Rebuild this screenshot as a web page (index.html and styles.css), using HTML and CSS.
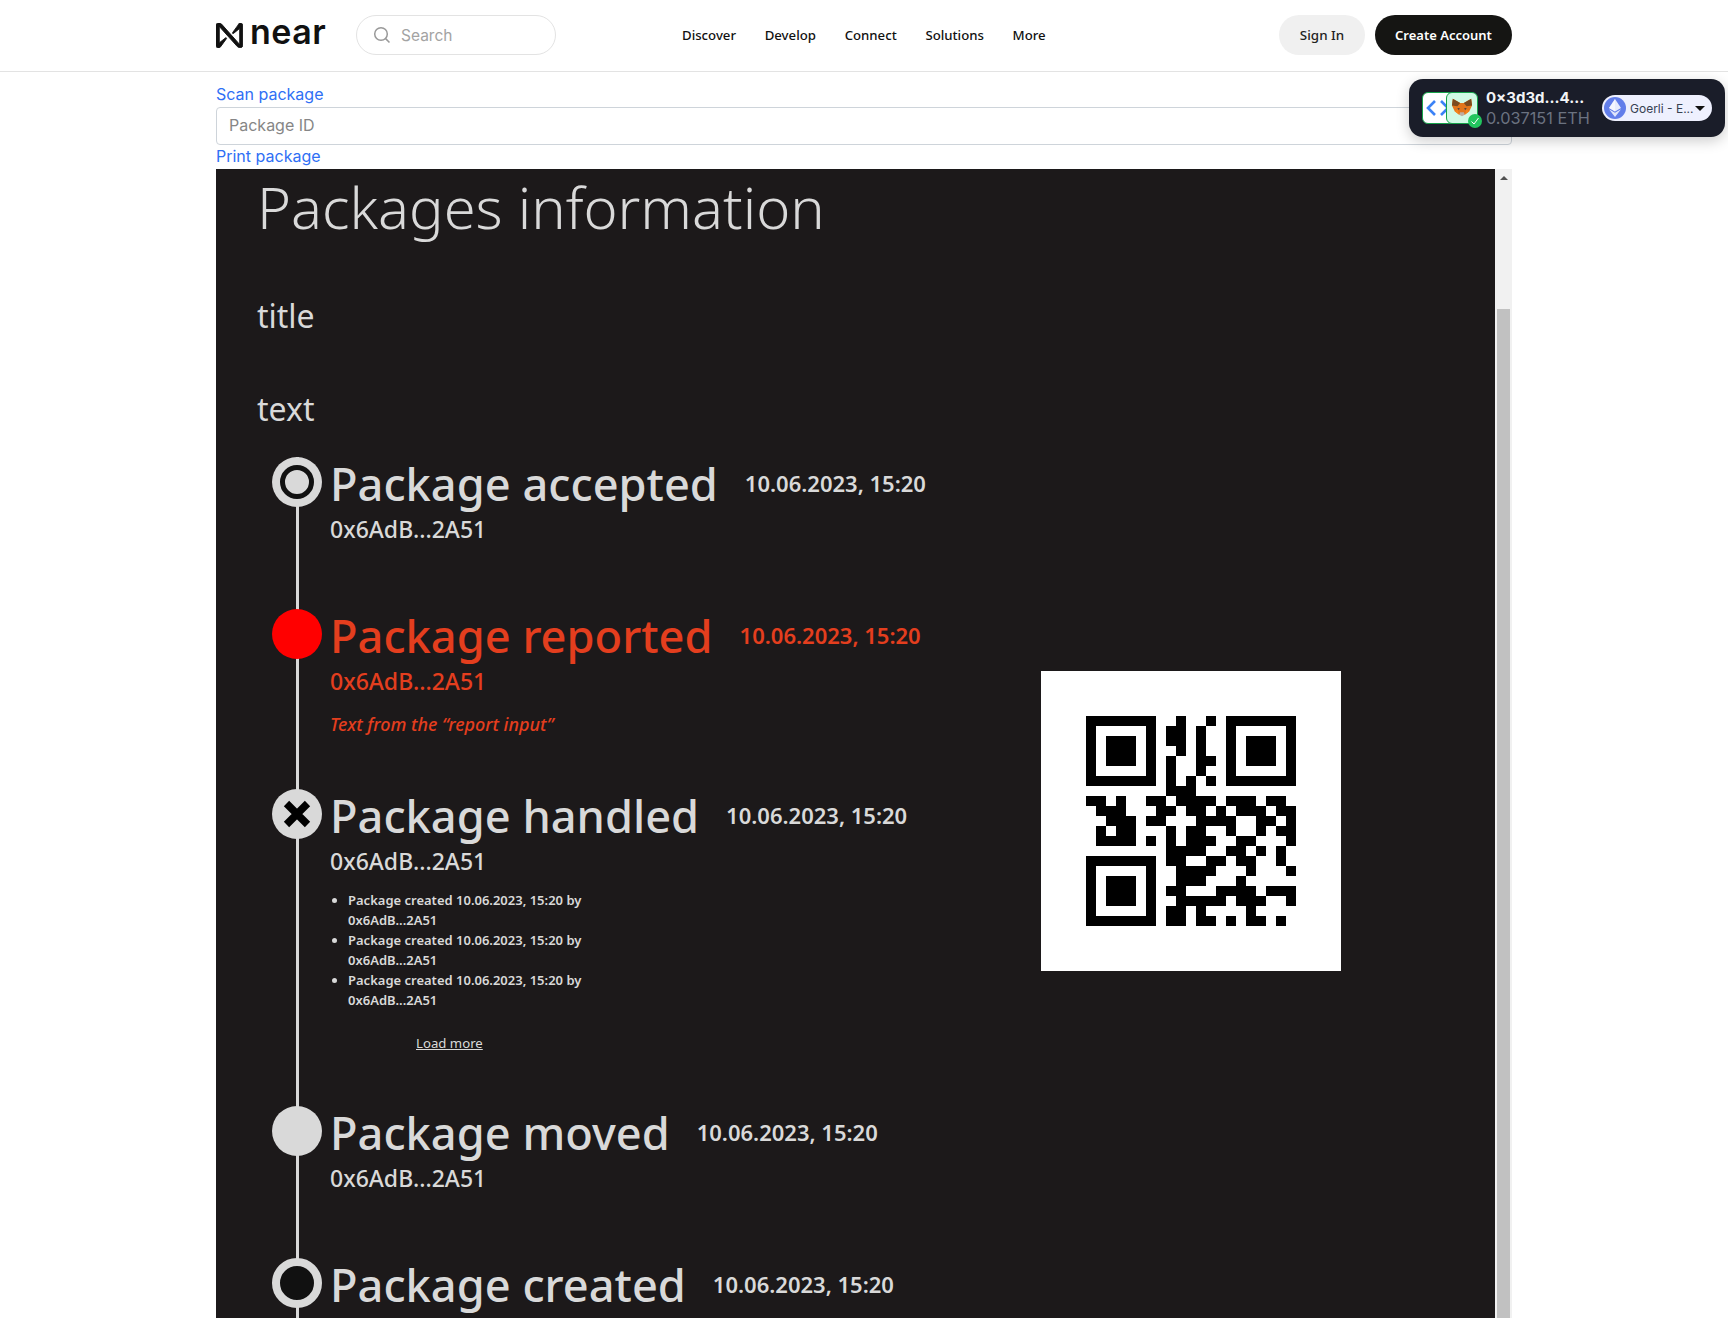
FILE: index.html
```html
<!DOCTYPE html>
<html>
<head>
  <title>Packages information</title>
  <link rel="stylesheet" href="styles.css">
</head>
<body>
  <header class="navbar">
    <div class="navbar-inner">
      <a class="logo" href="#">
        <svg class="logo-mark" width="27" height="25" viewBox="0 0 23 23" preserveAspectRatio="none">
          <path d="M19.2 1.3 L14.1 8.9 c-.4.5.3 1.2.8.7 l5-4.4 c.1-.1.3 0 .3.2 v13.7 c0 .2-.2.3-.4.2 L4.7 1 C4.2.4 3.4 0 2.6 0 H2 C.9 0 0 .9 0 2 v19 c0 1.1.9 2 2 2 .7 0 1.4-.4 1.8-1 l5.1-7.6 c.4-.5-.3-1.2-.8-.7 l-5 4.3 c-.1.1-.3 0-.3-.2 V3.9 c0-.2.2-.3.4-.2 l15 18 c.5.6 1.3 1 2.1 1 h.5 c1.1 0 2-.9 2-2 V2 c0-1.1-.9-2-2-2 -.7 0-1.4.4-1.8 1.3z" fill="#111" stroke="#111" stroke-width="0.8"/>
        </svg>
        <span class="logo-text">near</span>
      </a>
      <div class="search">
        <svg width="18" height="18" viewBox="0 0 18 18">
          <circle cx="8" cy="8" r="6.3" fill="none" stroke="#999" stroke-width="1.5"/>
          <path d="M12.6 12.6 L16.5 16.5" stroke="#999" stroke-width="1.5"/>
        </svg>
        <span>Search</span>
      </div>
      <nav class="nav-links">
        <a href="#">Discover</a>
        <a href="#">Develop</a>
        <a href="#">Connect</a>
        <a href="#">Solutions</a>
        <a href="#">More</a>
      </nav>
      <div class="nav-buttons">
        <button class="btn-signin">Sign In</button>
        <button class="btn-create">Create Account</button>
      </div>
    </div>
  </header>

  <div class="wallet">
    <div class="wallet-icons">
      <div class="icon-app">
        <svg width="30" height="30" viewBox="0 0 30 30">
          <path d="M12 8 L5 15 L12 22" fill="none" stroke="#3b82f6" stroke-width="2.6"/>
          <path d="M18 8 L25 15 L18 22" fill="none" stroke="#3b82f6" stroke-width="2.6"/>
        </svg>
      </div>
      <div class="icon-fox">
        <svg width="22" height="20" viewBox="0 0 24 24" preserveAspectRatio="none">
          <path d="M2 1 L10 6 H14 L22 1 L23 9 L20 16 L15 20 H9 L4 16 L1 9 Z" fill="#e2761b"/>
          <path d="M2 1 L10 6 L7 10 L1 9 Z M22 1 L14 6 L17 10 L23 9 Z" fill="#7a4a1e"/>
          <path d="M9 20 L10 17 H14 L15 20 L12 22 Z" fill="#c0ad9e"/>
          <path d="M7 12 L10 13 L8 14 Z M17 12 L14 13 L16 14 Z" fill="#233447"/>
          <path d="M4 16 L9 20 L7 14 Z M20 16 L15 20 L17 14 Z" fill="#f6851b"/>
        </svg>
      </div>
      <div class="icon-check">
        <svg width="10" height="10" viewBox="0 0 10 10">
          <path d="M1.5 5.5 L4 8 L8.5 2" fill="none" stroke="#fff" stroke-width="1"/>
        </svg>
      </div>
    </div>
    <div class="wallet-info">
      <div class="wallet-address">0×3d3d...4...</div>
      <div class="wallet-balance">0.037151 ETH</div>
    </div>
    <div class="chain">
      <div class="chain-icon">
        <svg width="12" height="18" viewBox="0 0 12 18">
          <path d="M6 0 L12 9 L6 12.5 L0 9 Z" fill="#fff" opacity="0.85"/>
          <path d="M6 0 V12.5 L0 9 Z" fill="#fff" opacity="0.6"/>
          <path d="M0 10.3 L6 13.8 L12 10.3 L6 18 Z" fill="#fff" opacity="0.8"/>
        </svg>
      </div>
      <span class="chain-name">Goerli - E...</span>
      <span class="chain-caret"></span>
    </div>
  </div>

  <main class="content">
    <a class="link link-scan" href="#">Scan package</a>
    <input class="package-input" type="text" placeholder="Package ID">
    <a class="link link-print" href="#">Print package</a>

    <div class="viewer">
      <div class="panel">
        <h1>Packages information</h1>
        <h2 class="panel-title">title</h2>
        <p class="panel-text">text</p>

        <div class="columns">
          <ol class="timeline">
            <li class="step step-accepted">
              <span class="dot dot-accepted"></span>
              <div class="step-head">
                <h3>Package accepted</h3>
                <span class="step-date">10.06.2023, 15:20</span>
              </div>
              <div class="step-address">0x6AdB...2A51</div>
            </li>
            <li class="step step-reported">
              <span class="dot dot-reported"></span>
              <div class="step-head">
                <h3>Package reported</h3>
                <span class="step-date">10.06.2023, 15:20</span>
              </div>
              <div class="step-address">0x6AdB...2A51</div>
              <p class="step-note">Text from the “report input”</p>
            </li>
            <li class="step step-handled">
              <span class="dot dot-handled">
                <svg width="32" height="32" viewBox="0 0 32 32">
                  <path d="M5.5 5.5 L26.5 26.5 M26.5 5.5 L5.5 26.5" stroke="#000" stroke-width="7.5"/>
                </svg>
              </span>
              <div class="step-head">
                <h3>Package handled</h3>
                <span class="step-date">10.06.2023, 15:20</span>
              </div>
              <div class="step-address">0x6AdB...2A51</div>
              <ul class="history">
                <li>Package created 10.06.2023, 15:20 by 0x6AdB...2A51</li>
                <li>Package created 10.06.2023, 15:20 by 0x6AdB...2A51</li>
                <li>Package created 10.06.2023, 15:20 by 0x6AdB...2A51</li>
              </ul>
              <a class="load-more" href="#">Load more</a>
            </li>
            <li class="step step-moved">
              <span class="dot"></span>
              <div class="step-head">
                <h3>Package moved</h3>
                <span class="step-date">10.06.2023, 15:20</span>
              </div>
              <div class="step-address">0x6AdB...2A51</div>
            </li>
            <li class="step">
              <span class="dot dot-created"></span>
              <div class="step-head">
                <h3>Package created</h3>
                <span class="step-date">10.06.2023, 15:20</span>
              </div>
              <div class="step-address">0x6AdB...2A51</div>
            </li>
          </ol>

          <div class="qr">
            <svg width="210" height="210" viewBox="0 0 21 21" shape-rendering="crispEdges">
              <path fill-rule="evenodd" d="M0 0h7v7h-7z M1 1v5h5v-5z M2 2h3v3h-3z M14 0h7v7h-7z M15 1v5h5v-5z M16 2h3v3h-3z M0 14h7v7h-7z M1 15v5h5v-5z M2 16h3v3h-3z"/>
              <path d="M9 0h1v1h-1z M12 0h1v1h-1z
                M8 1h2v1h-2z M11 1h1v1h-1z
                M8 2h2v1h-2z M11 2h1v1h-1z
                M9 3h1v1h-1z M11 3h1v1h-1z
                M8 4h1v1h-1z M11 4h2v1h-2z
                M8 5h1v1h-1z M11 5h1v1h-1z
                M8 6h1v1h-1z M10 6h1v1h-1z M12 6h1v1h-1z
                M8 7h3v1h-3z
                M0 8h2v1h-2z M3 8h1v1h-1z M6 8h2v1h-2z M9 8h4v1h-4z M14 8h3v1h-3z M18 8h2v1h-2z
                M1 9h3v1h-3z M7 9h2v1h-2z M10 9h2v1h-2z M13 9h1v1h-1z M15 9h3v1h-3z M19 9h2v1h-2z
                M2 10h3v1h-3z M6 10h2v1h-2z M11 10h4v1h-4z M17 10h2v1h-2z M20 10h1v1h-1z
                M1 11h1v1h-1z M3 11h2v1h-2z M8 11h1v1h-1z M10 11h2v1h-2z M14 11h1v1h-1z M17 11h1v1h-1z M19 11h2v1h-2z
                M1 12h4v1h-4z M6 12h1v1h-1z M8 12h1v1h-1z M10 12h3v1h-3z M15 12h2v1h-2z M20 12h1v1h-1z
                M8 13h4v1h-4z M14 13h2v1h-2z M17 13h1v1h-1z M19 13h1v1h-1z
                M8 14h2v1h-2z M12 14h2v1h-2z M15 14h2v1h-2z M19 14h1v1h-1z
                M9 15h4v1h-4z M16 15h1v1h-1z M20 15h1v1h-1z
                M9 16h3v1h-3z M15 16h1v1h-1z
                M8 17h2v1h-2z M13 17h4v1h-4z M18 17h3v1h-3z
                M9 18h5v1h-5z M15 18h3v1h-3z M20 18h1v1h-1z
                M8 19h2v1h-2z M11 19h1v1h-1z M16 19h1v1h-1z
                M8 20h2v1h-2z M11 20h2v1h-2z M14 20h1v1h-1z M16 20h2v1h-2z M19 20h1v1h-1z"/>
            </svg>
          </div>
        </div>
      </div>
      <div class="scrollbar">
        <span class="scroll-arrow"></span>
        <div class="scroll-thumb"></div>
      </div>
    </div>
  </main>
</body>
</html>
```
FILE: styles.css
```css
html, body {
  margin: 0;
  height: 100%;
  overflow: hidden;
}

body {
  font-family: Inter, sans-serif;
  background-color: #fff;
  color: #111;
}

a {
  text-decoration: none;
}

.navbar {
  height: 71px;
  border-bottom: 1px solid #e3e3e3;
}

.navbar-inner {
  display: flex;
  align-items: center;
  box-sizing: border-box;
  height: 100%;
  width: 1296px;
  margin: 0 216px;
  padding-bottom: 1px;
}

.logo {
  display: flex;
  align-items: center;
  gap: 7px;
  width: 140px;
  color: #111;
}

.logo-text {
  font-family: Inter, sans-serif;
  font-size: 34px;
  font-weight: 600;
  letter-spacing: 0.5px;
  line-height: 40px;
  margin-top: -6px;
}

.search {
  display: flex;
  align-items: center;
  gap: 10px;
  box-sizing: border-box;
  width: 200px;
  height: 40px;
  padding-left: 16px;
  border: 1px solid #e3e3e3;
  border-radius: 20px;
  color: #a3a3a3;
  font-size: 15.5px;
}

.nav-links {
  display: flex;
  gap: 28.7px;
  margin-left: 126px;
  margin-bottom: 1px;
}

.nav-links a {
  color: #111;
  font-family: "Noto Sans", sans-serif;
  font-size: 13.2px;
  font-weight: 500;
}

.nav-buttons {
  display: flex;
  gap: 10px;
  margin-left: auto;
}

.nav-buttons button {
  height: 40px;
  border: none;
  border-radius: 20px;
  font-family: "Noto Sans", sans-serif;
  font-size: 13px;
  font-weight: 600;
}

.btn-signin {
  width: 86px;
  background-color: #f0f0f0;
  color: #222;
}

.nav-buttons .btn-signin {
  font-size: 13.4px;
  font-weight: 500;
}

.btn-create {
  width: 137px;
  background-color: #151513;
  color: #fff;
}

.wallet {
  position: absolute;
  top: 79px;
  left: 1409px;
  display: flex;
  align-items: center;
  box-sizing: border-box;
  width: 316px;
  height: 58px;
  padding: 0 13px;
  background-color: #1a1d29;
  border-radius: 14px;
  box-shadow: 0 4px 14px rgba(0, 0, 0, 0.2);
}

.wallet-icons {
  position: relative;
  width: 56px;
  height: 32px;
  flex-shrink: 0;
}

.icon-app,
.icon-fox {
  position: absolute;
  top: 0;
  box-sizing: border-box;
  width: 32px;
  height: 32px;
  border: 1px solid #16a34a;
  border-radius: 6px;
  overflow: hidden;
}

.icon-app {
  left: 0;
  background-color: #fff;
}

.icon-fox {
  left: 24px;
  display: flex;
  align-items: center;
  justify-content: center;
  background-color: #d1fae5;
}

.icon-check {
  position: absolute;
  left: 46px;
  top: 22px;
  display: flex;
  align-items: center;
  justify-content: center;
  width: 14px;
  height: 14px;
  background-color: #22c55e;
  border-radius: 50%;
}

.wallet-info {
  width: 116px;
  margin-left: 8px;
  flex-shrink: 0;
}

.wallet-address {
  color: #f3f4f6;
  font-size: 15px;
  font-weight: 700;
  line-height: 20px;
}

.wallet-balance {
  color: #6b7280;
  font-size: 16.3px;
  line-height: 20px;
}

.chain {
  display: flex;
  align-items: center;
  box-sizing: border-box;
  width: 110px;
  height: 26px;
  padding-left: 2px;
  background-color: #eef0fe;
  border-radius: 13px;
  flex-shrink: 0;
}

.chain-icon {
  display: flex;
  align-items: center;
  justify-content: center;
  width: 22px;
  height: 22px;
  background-color: #627eea;
  border-radius: 50%;
  flex-shrink: 0;
}

.chain-name {
  margin-left: 4px;
  color: #374151;
  font-size: 12px;
  white-space: nowrap;
}

.chain-caret {
  width: 0;
  height: 0;
  margin-left: 1px;
  border-left: 5px solid transparent;
  border-right: 5px solid transparent;
  border-top: 5px solid #111;
}

.content {
  display: flex;
  flex-direction: column;
  width: 1296px;
  margin: 0 216px;
}

.link {
  display: block;
  color: #2f6ff5;
  font-size: 16px;
  line-height: 20px;
}

.link-scan {
  margin-top: 12px;
  margin-bottom: 3px;
}

.package-input {
  box-sizing: border-box;
  width: 100%;
  height: 38px;
  padding: 0 12px 2px;
  border: 1px solid #ced4da;
  border-radius: 4px;
  font-family: Inter, sans-serif;
  font-size: 16px;
}

.package-input::placeholder {
  color: #868686;
}

.link-print {
  margin-top: 1px;
  margin-bottom: 3px;
}

.viewer {
  display: flex;
  height: 1149px;
}

.panel {
  width: 1279px;
  background-color: #1c191a;
  color: #d9d9d9;
  font-family: "Noto Sans", sans-serif;
}

.panel h1 {
  margin: 0;
  padding-left: 41px;
  font-size: 57.8px;
  font-weight: 300;
  line-height: 76px;
}

.panel-title,
.panel-text {
  margin: 0;
  padding-left: 41px;
  font-size: 32px;
  font-weight: 400;
  line-height: 44px;
}

.panel-title {
  margin-top: 49px;
}

.panel-text {
  margin-top: 49px;
}

.columns {
  position: relative;
  margin-top: 26px;
}

.timeline {
  margin: 0;
  padding: 0 0 0 56px;
  list-style: none;
}

.step {
  display: flow-root;
  position: relative;
  padding-left: 58px;
}

.step::before {
  content: "";
  position: absolute;
  left: 24px;
  top: 0;
  bottom: 0;
  width: 3px;
  background-color: #d9d9d9;
}

.step-accepted {
  height: 152px;
}

.step-reported {
  height: 180px;
}

.step-handled {
  height: 317px;
}

.step-moved {
  height: 152px;
}

.dot {
  position: absolute;
  left: 0;
  top: 0;
  display: flex;
  align-items: center;
  justify-content: center;
  box-sizing: border-box;
  width: 50px;
  height: 50px;
  background-color: #d9d9d9;
  border-radius: 50%;
}

.dot-accepted::after {
  content: "";
  box-sizing: border-box;
  width: 34px;
  height: 34px;
  border: 5px solid #111;
  border-radius: 50%;
}

.dot-reported {
  background-color: #f00;
}

.dot-created {
  border: 8px solid #d9d9d9;
  background-color: #111;
}

.step-head {
  display: flex;
  align-items: center;
  gap: 27px;
  margin-top: -3px;
}

.step h3 {
  margin: 0;
  font-size: 45.2px;
  font-weight: 500;
  line-height: 60px;
}

.step-date {
  margin-bottom: 2px;
  font-size: 22px;
  font-weight: 600;
}

.step-address {
  font-size: 23px;
  font-weight: 500;
  line-height: 30px;
}

.step-reported {
  color: #e43e1e;
}

.step-note {
  margin: 16px 0 0;
  font-size: 18px;
  font-style: italic;
  font-weight: 500;
}

.history {
  width: 250px;
  margin: 14px 0 0;
  padding-left: 18px;
  list-style: disc;
  font-size: 13px;
  font-weight: 600;
  line-height: 20px;
}

.load-more {
  display: block;
  margin: 24px 0 0 86px;
  color: #d9d9d9;
  font-size: 13.2px;
  text-decoration: underline;
}

.qr {
  position: absolute;
  left: 825px;
  top: 214px;
  display: flex;
  align-items: center;
  justify-content: center;
  width: 300px;
  height: 300px;
  background-color: #fff;
}

.scrollbar {
  display: flex;
  flex-direction: column;
  align-items: center;
  width: 17px;
  background-color: #f1f1f1;
}

.scroll-arrow {
  width: 0;
  height: 0;
  margin-top: 7px;
  border-left: 4px solid transparent;
  border-right: 4px solid transparent;
  border-bottom: 4px solid #505050;
}

.scroll-thumb {
  flex: 1;
  width: 13px;
  margin-top: 129px;
  background-color: #c1c1c1;
}
```
